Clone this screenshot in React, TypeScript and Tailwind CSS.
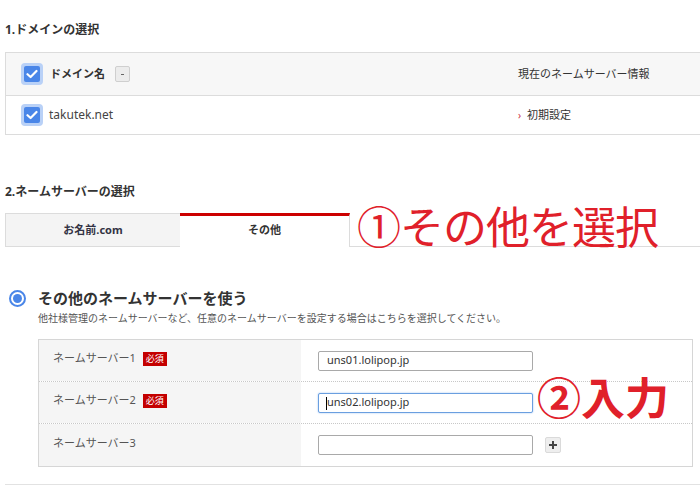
import React from "react";

const jp = { fontFamily: '"Noto Sans", "Noto Sans CJK JP", sans-serif' };

function Check() {
  return (
    <div className="w-[22px] h-[22px] rounded-[4px] bg-[#b9d1f7] flex items-center justify-center">
      <div className="w-[16px] h-[16px] rounded-[2px] bg-[#4a86e8] flex items-center justify-center">
        <svg width="12" height="10" viewBox="0 0 12 10">
          <path d="M1.5 5.2 L4.6 8 L10.5 2" fill="none" stroke="#fff" strokeWidth="2.2" strokeLinecap="round" strokeLinejoin="round" />
        </svg>
      </div>
    </div>
  );
}

function Badge() {
  return (
    <span className="ml-[7px] inline-flex items-center h-[14px] px-[3px] bg-[#c40000] text-white text-[9px] leading-none">必須</span>
  );
}

function Row({ label, req, children, last }: { label: string; req?: boolean; children: React.ReactNode; last?: boolean }) {
  return (
    <div className={`flex h-[42px] ${last ? "" : "border-b border-dotted border-[#c8c8c8]"}`}>
      <div className="w-[262px] bg-[#f5f5f5] flex items-center pl-[14px] pb-[4px] text-[11px] text-[#555]">
        <span>{label}</span>
        {req && <Badge />}
      </div>
      <div className="flex-1 flex items-center pl-[17px] gap-[12px]">{children}</div>
    </div>
  );
}

function Field({ value, focus }: { value?: string; focus?: boolean }) {
  return (
    <div
      className={`relative w-[215px] h-[20px] rounded-[2px] bg-white flex items-center pl-[8px] text-[11px] text-[#333] ${
        focus ? "border border-[#6a9fe0] shadow-[0_0_2px_#9cc0f0]" : "border border-[#a9a9a9]"
      }`}
    >
      {focus && <span className="absolute left-[7px] top-[3px] w-[1px] h-[13px] bg-black" />}
      {value}
    </div>
  );
}

export default function App() {
  return (
    <div className="relative w-[700px] h-[487px] overflow-hidden bg-white text-[#333]" style={jp}>
      <div className="pl-[5px] pt-[22px]">
        <h2 className="text-[12px] font-bold leading-[16px]">1.ドメインの選択</h2>
        <div className="mt-[14px] w-[700px] border border-[#dcdcdc]">
          <div className="h-[43px] bg-[#f7f7f7] border-b border-[#dcdcdc] flex items-center">
            <div className="w-[512px] flex items-center pl-[15px]">
              <Check />
              <span className="ml-[7px] text-[11px] font-bold">ドメイン名</span>
              <div className="ml-[10px] w-[15px] h-[16px] rounded-[2px] bg-[#ececec] border border-[#cfcfcf] flex items-center justify-center">
                <span className="w-[3px] h-[1px] bg-[#666]" />
              </div>
            </div>
            <span className="text-[11px]">現在のネームサーバー情報</span>
          </div>
          <div className="h-[38px] flex items-center">
            <div className="w-[512px] flex items-center pl-[15px]">
              <Check />
              <span className="ml-[6px] text-[12px] text-[#444]">takutek.net</span>
            </div>
            <span className="text-[10px] text-[#cc3344] mr-[6px]">›</span>
            <span className="text-[11px] text-[#333]">初期設定</span>
          </div>
        </div>

        <h2 className="mt-[49px] text-[12px] font-bold leading-[16px]">2.ネームサーバーの選択</h2>
        <div className="mt-[13px] flex h-[34px]">
          <div className="w-[175px] bg-[#f4f4f4] border-t border-l border-b border-[#dcdcdc] flex items-center justify-center text-[11px] font-bold text-[#334]">
            お名前.com
          </div>
          <div className="w-[170px] bg-white border-t-[3px] border-[#cc0000] border-r border-r-[#dcdcdc] flex items-center justify-center text-[11px] font-bold pb-[2px]">
            その他
          </div>
          <div className="flex-1 border-b border-[#dcdcdc]" />
        </div>

        <div className="mt-[41px] flex items-center pl-[4px] h-[20px]">
          <div className="w-[17px] h-[17px] rounded-full border-[2px] border-[#4a86e8] bg-white flex items-center justify-center">
            <div className="w-[9px] h-[9px] rounded-full bg-[#4a86e8]" />
          </div>
          <span className="ml-[12px] text-[15px] font-bold leading-[20px]">その他のネームサーバーを使う</span>
        </div>
        <p className="mt-[3px] ml-[33px] text-[10px] leading-[14px] text-[#555]">
          他社様管理のネームサーバーなど、任意のネームサーバーを設定する場合はこちらを選択してください。
        </p>

        <div className="mt-[14px] ml-[33px] w-[655px] border border-[#d6d6d6]">
          <Row label="ネームサーバー1" req>
            <Field value="uns01.lolipop.jp" />
          </Row>
          <Row label="ネームサーバー2" req>
            <Field value="uns02.lolipop.jp" focus />
          </Row>
          <Row label="ネームサーバー3" last>
            <Field />
            <div className="w-[16px] h-[16px] rounded-[2px] bg-[#eeeeee] border border-[#dadada] flex items-center justify-center">
              <svg width="10" height="10" viewBox="0 0 10 10">
                <path d="M5 1 V9 M1 5 H9" stroke="#444" strokeWidth="2" />
              </svg>
            </div>
          </Row>
        </div>

        <div className="mt-[17px] w-[700px] border-t border-[#e2e2e2]" />
      </div>

      <div className="absolute left-[357px] top-[203px] text-[44px] leading-[48px] tracking-[-1px] text-[#e0202a] font-normal whitespace-nowrap">
        ①その他を選択
      </div>
      <div className="absolute left-[537px] top-[374px] text-[44px] leading-[48px] text-[#e0202a] font-bold whitespace-nowrap">
        ②入力
      </div>
    </div>
  );
}
